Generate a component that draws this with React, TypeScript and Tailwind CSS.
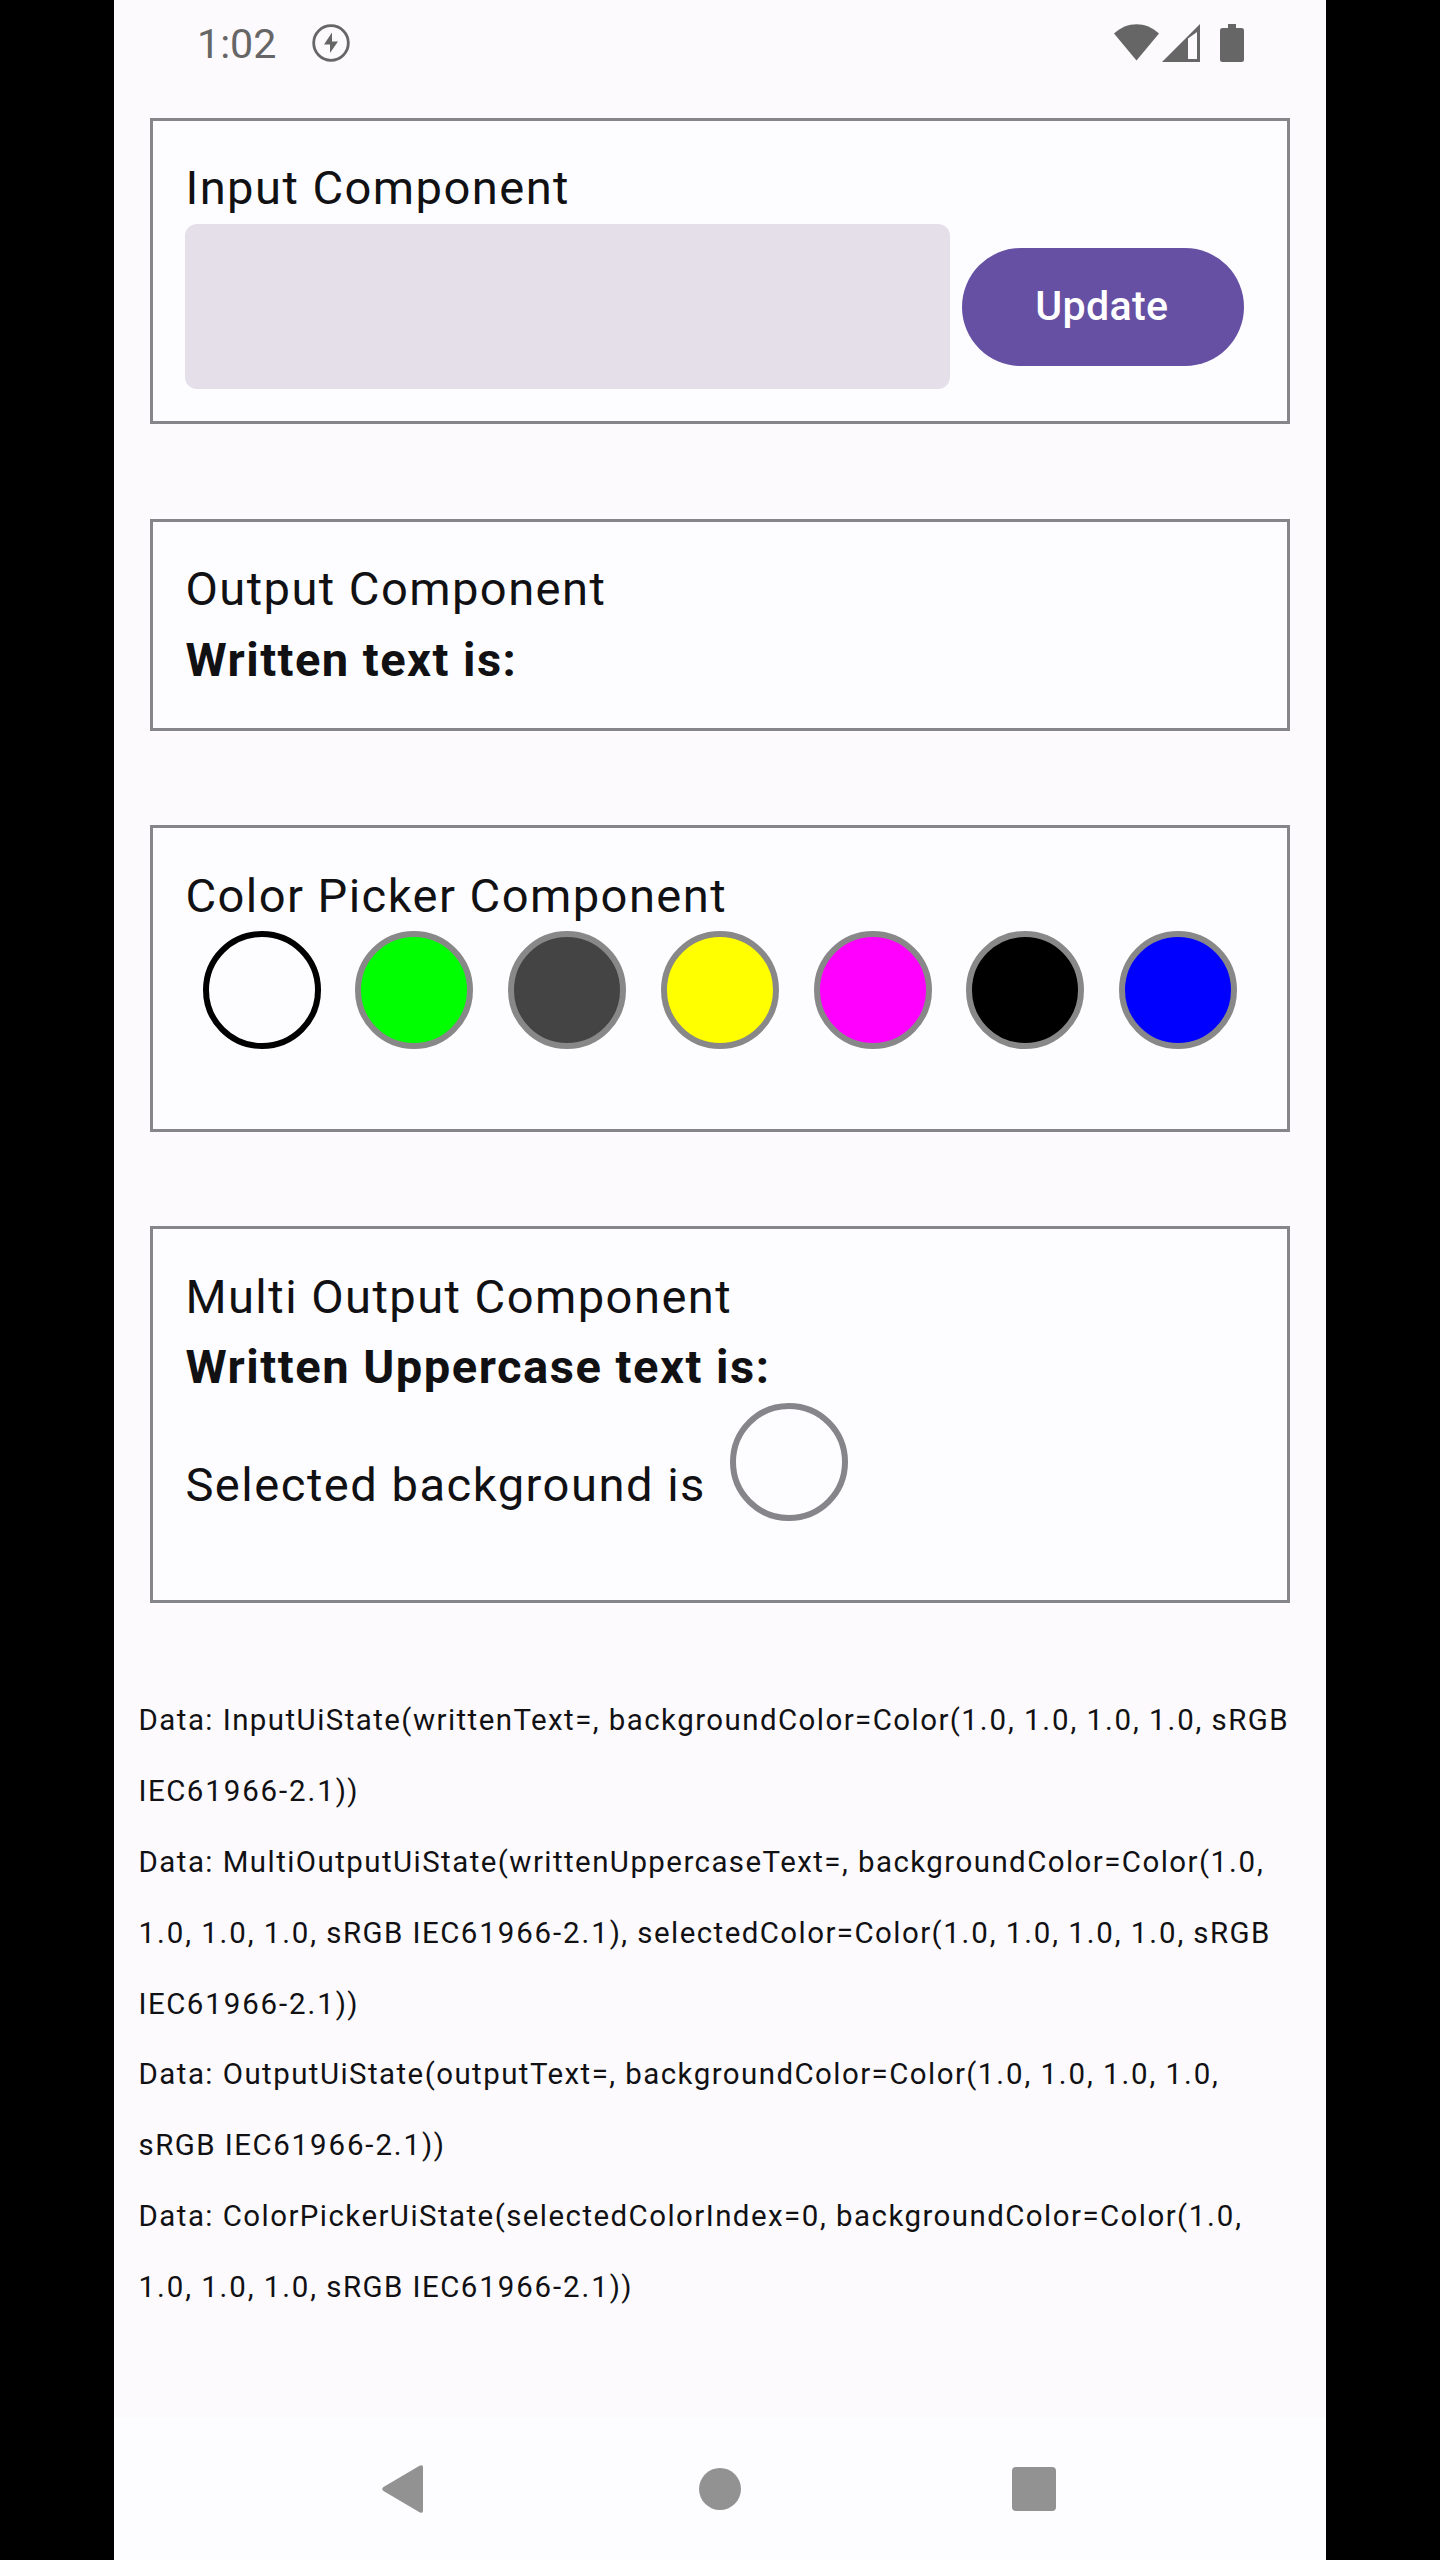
import type { ReactNode } from "react";

const swatches = [
  { name: "White", classes: "bg-[#fdfdff] border-black" },
  { name: "Green", classes: "bg-[#00ff00] border-[#888888]" },
  { name: "Dark gray", classes: "bg-[#444444] border-[#888888]" },
  { name: "Yellow", classes: "bg-[#ffff00] border-[#888888]" },
  { name: "Magenta", classes: "bg-[#ff00ff] border-[#888888]" },
  { name: "Black", classes: "bg-black border-[#888888]" },
  { name: "Blue", classes: "bg-[#0000ff] border-[#888888]" },
];

const dataLines = [
  "Data: InputUiState(writtenText=, backgroundColor=Color(1.0, 1.0, 1.0, 1.0, sRGB",
  "IEC61966-2.1))",
  "Data: MultiOutputUiState(writtenUppercaseText=, backgroundColor=Color(1.0,",
  "1.0, 1.0, 1.0, sRGB IEC61966-2.1), selectedColor=Color(1.0, 1.0, 1.0, 1.0, sRGB",
  "IEC61966-2.1))",
  "Data: OutputUiState(outputText=, backgroundColor=Color(1.0, 1.0, 1.0, 1.0,",
  "sRGB IEC61966-2.1))",
  "Data: ColorPickerUiState(selectedColorIndex=0, backgroundColor=Color(1.0,",
  "1.0, 1.0, 1.0, sRGB IEC61966-2.1))",
];

function StatusBar() {
  return (
    <header className="flex h-[118px] items-start justify-between pt-[24px] pr-[82px] pl-[83px] text-[#666666]">
      <div className="flex items-center">
        <span className="h-[38px] w-[114.5px] text-[41.2px] leading-[41px] whitespace-nowrap">1:02</span>
        <svg className="h-[38px] w-[38px]" viewBox="0 0 38 38" fill="none">
          <circle cx="19" cy="19" r="17.3" stroke="currentColor" strokeWidth="2.8" />
          <path d="M20 8.5 12 20.5h6V29l8-11.5h-6z" fill="currentColor" />
        </svg>
      </div>
      <div className="flex h-[38px] items-start">
        <svg className="h-[38px] w-[45px]" viewBox="0 0 45 38" fill="currentColor">
          <path d="M0 9.500C13 -3 32 -3 45 9.500L22.500 36.500Z" />
        </svg>
        <svg className="ml-[3px] h-[38px] w-[38px]" viewBox="0 0 38 38" fill="currentColor" fillRule="evenodd">
          <path d="M38 0V38H0ZM26 14.500V35H35V8Z" />
        </svg>
        <svg className="ml-[20px] h-[38px] w-[24px]" viewBox="0 0 24 38" fill="currentColor">
          <path d="M8 0H16V4H21.500Q24 4 24 6.500V35.500Q24 38 21.500 38H2.500Q0 38 0 35.500V6.500Q0 4 2.500 4H8Z" />
        </svg>
      </div>
    </header>
  );
}

function Card({ title, className, children }: { title: string; className: string; children: ReactNode }) {
  return (
    <section className={`border-[3px] border-[#85858a] bg-[#fdfdff] px-[32.4px] pt-[32.4px] ${className}`}>
      <h2 className="h-[70.7px] leading-[70.7px]">{title}</h2>
      {children}
    </section>
  );
}

// Numbers are tracked slightly wider than the words around them.
function DataLine({ text }: { text: string }) {
  return (
    <p>
      {text.split(/([\d.-]+)/).map((part, i) =>
        i % 2 === 1 ? (
          <span key={i} className="tracking-[1.9px]">
            {part}
          </span>
        ) : (
          part
        ),
      )}
    </p>
  );
}

function NavBar() {
  return (
    <nav className="flex h-[142px] items-center bg-[#fdfdff] pl-[268px] text-[#929292]">
      <svg className="h-[48px] w-[41px]" viewBox="0 0 41 48" fill="currentColor">
        <path d="M37.500 .8Q41 -1 41 2.500V45.500Q41 49 37.500 47.200L1.500 26Q-1 24 1.500 22Z" />
      </svg>
      <span className="ml-[276px] h-[42px] w-[42px] rounded-full bg-[#929292]" />
      <span className="ml-[271px] h-[44px] w-[44px] rounded-[4px] bg-[#929292]" />
    </nav>
  );
}

export default function App() {
  return (
    <div className="flex h-[2560px] w-[1440px] justify-center bg-black font-['Roboto',sans-serif]">
      <div className="flex h-full w-[1212px] flex-col bg-[#fcfafd] text-[#111114]">
        <StatusBar />
        <main className="flex flex-1 flex-col text-[47.1px] tracking-[1.45px] whitespace-nowrap">
          <div className="flex flex-col gap-[94.6px] px-[36px]">
            <Card title="Input Component" className="h-[306px]">
              <div className="-ml-[0.5px] flex h-[165px] items-center gap-[12px]">
                <input
                  aria-label="Text"
                  className="h-[165px] w-[765px] rounded-[12px] bg-[#e4dfe9] px-[47px] outline-none"
                />
                <button className="h-[118px] w-[282px] rounded-full bg-[#6550a3] pr-[2px] text-[41.2px] font-medium tracking-[0.3px] text-white">
                  Update
                </button>
              </div>
            </Card>
            <Card title="Output Component" className="h-[212.1px]">
              <p className="leading-[70.7px] font-bold">Written text is:</p>
            </Card>
            <Card title="Color Picker Component" className="h-[306.4px]">
              <div className="flex justify-around">
                {swatches.map((s) => (
                  <button
                    key={s.name}
                    aria-label={s.name}
                    className={`h-[118px] w-[118px] rounded-full border-[6px] ${s.classes}`}
                  />
                ))}
              </div>
            </Card>
            <Card title="Multi Output Component" className="h-[377.1px]">
              <p className="leading-[70.7px] font-bold tracking-[1.5px]">Written Uppercase text is:</p>
              <div className="flex h-[118px] items-end">
                <p className="w-[545px] leading-[70.7px] tracking-[1.5px]">Selected background is</p>
                <span className="h-[118px] w-[118px] rounded-full border-[6px] border-[#85858a] bg-[#fdfdff]" />
              </div>
            </Card>
          </div>
          <div className="mt-[82px] pl-[24.6px] text-[29.45px] leading-[70.8px]">
            {dataLines.map((line, i) => (
              <DataLine key={i} text={line} />
            ))}
          </div>
        </main>
        <NavBar />
      </div>
    </div>
  );
}
